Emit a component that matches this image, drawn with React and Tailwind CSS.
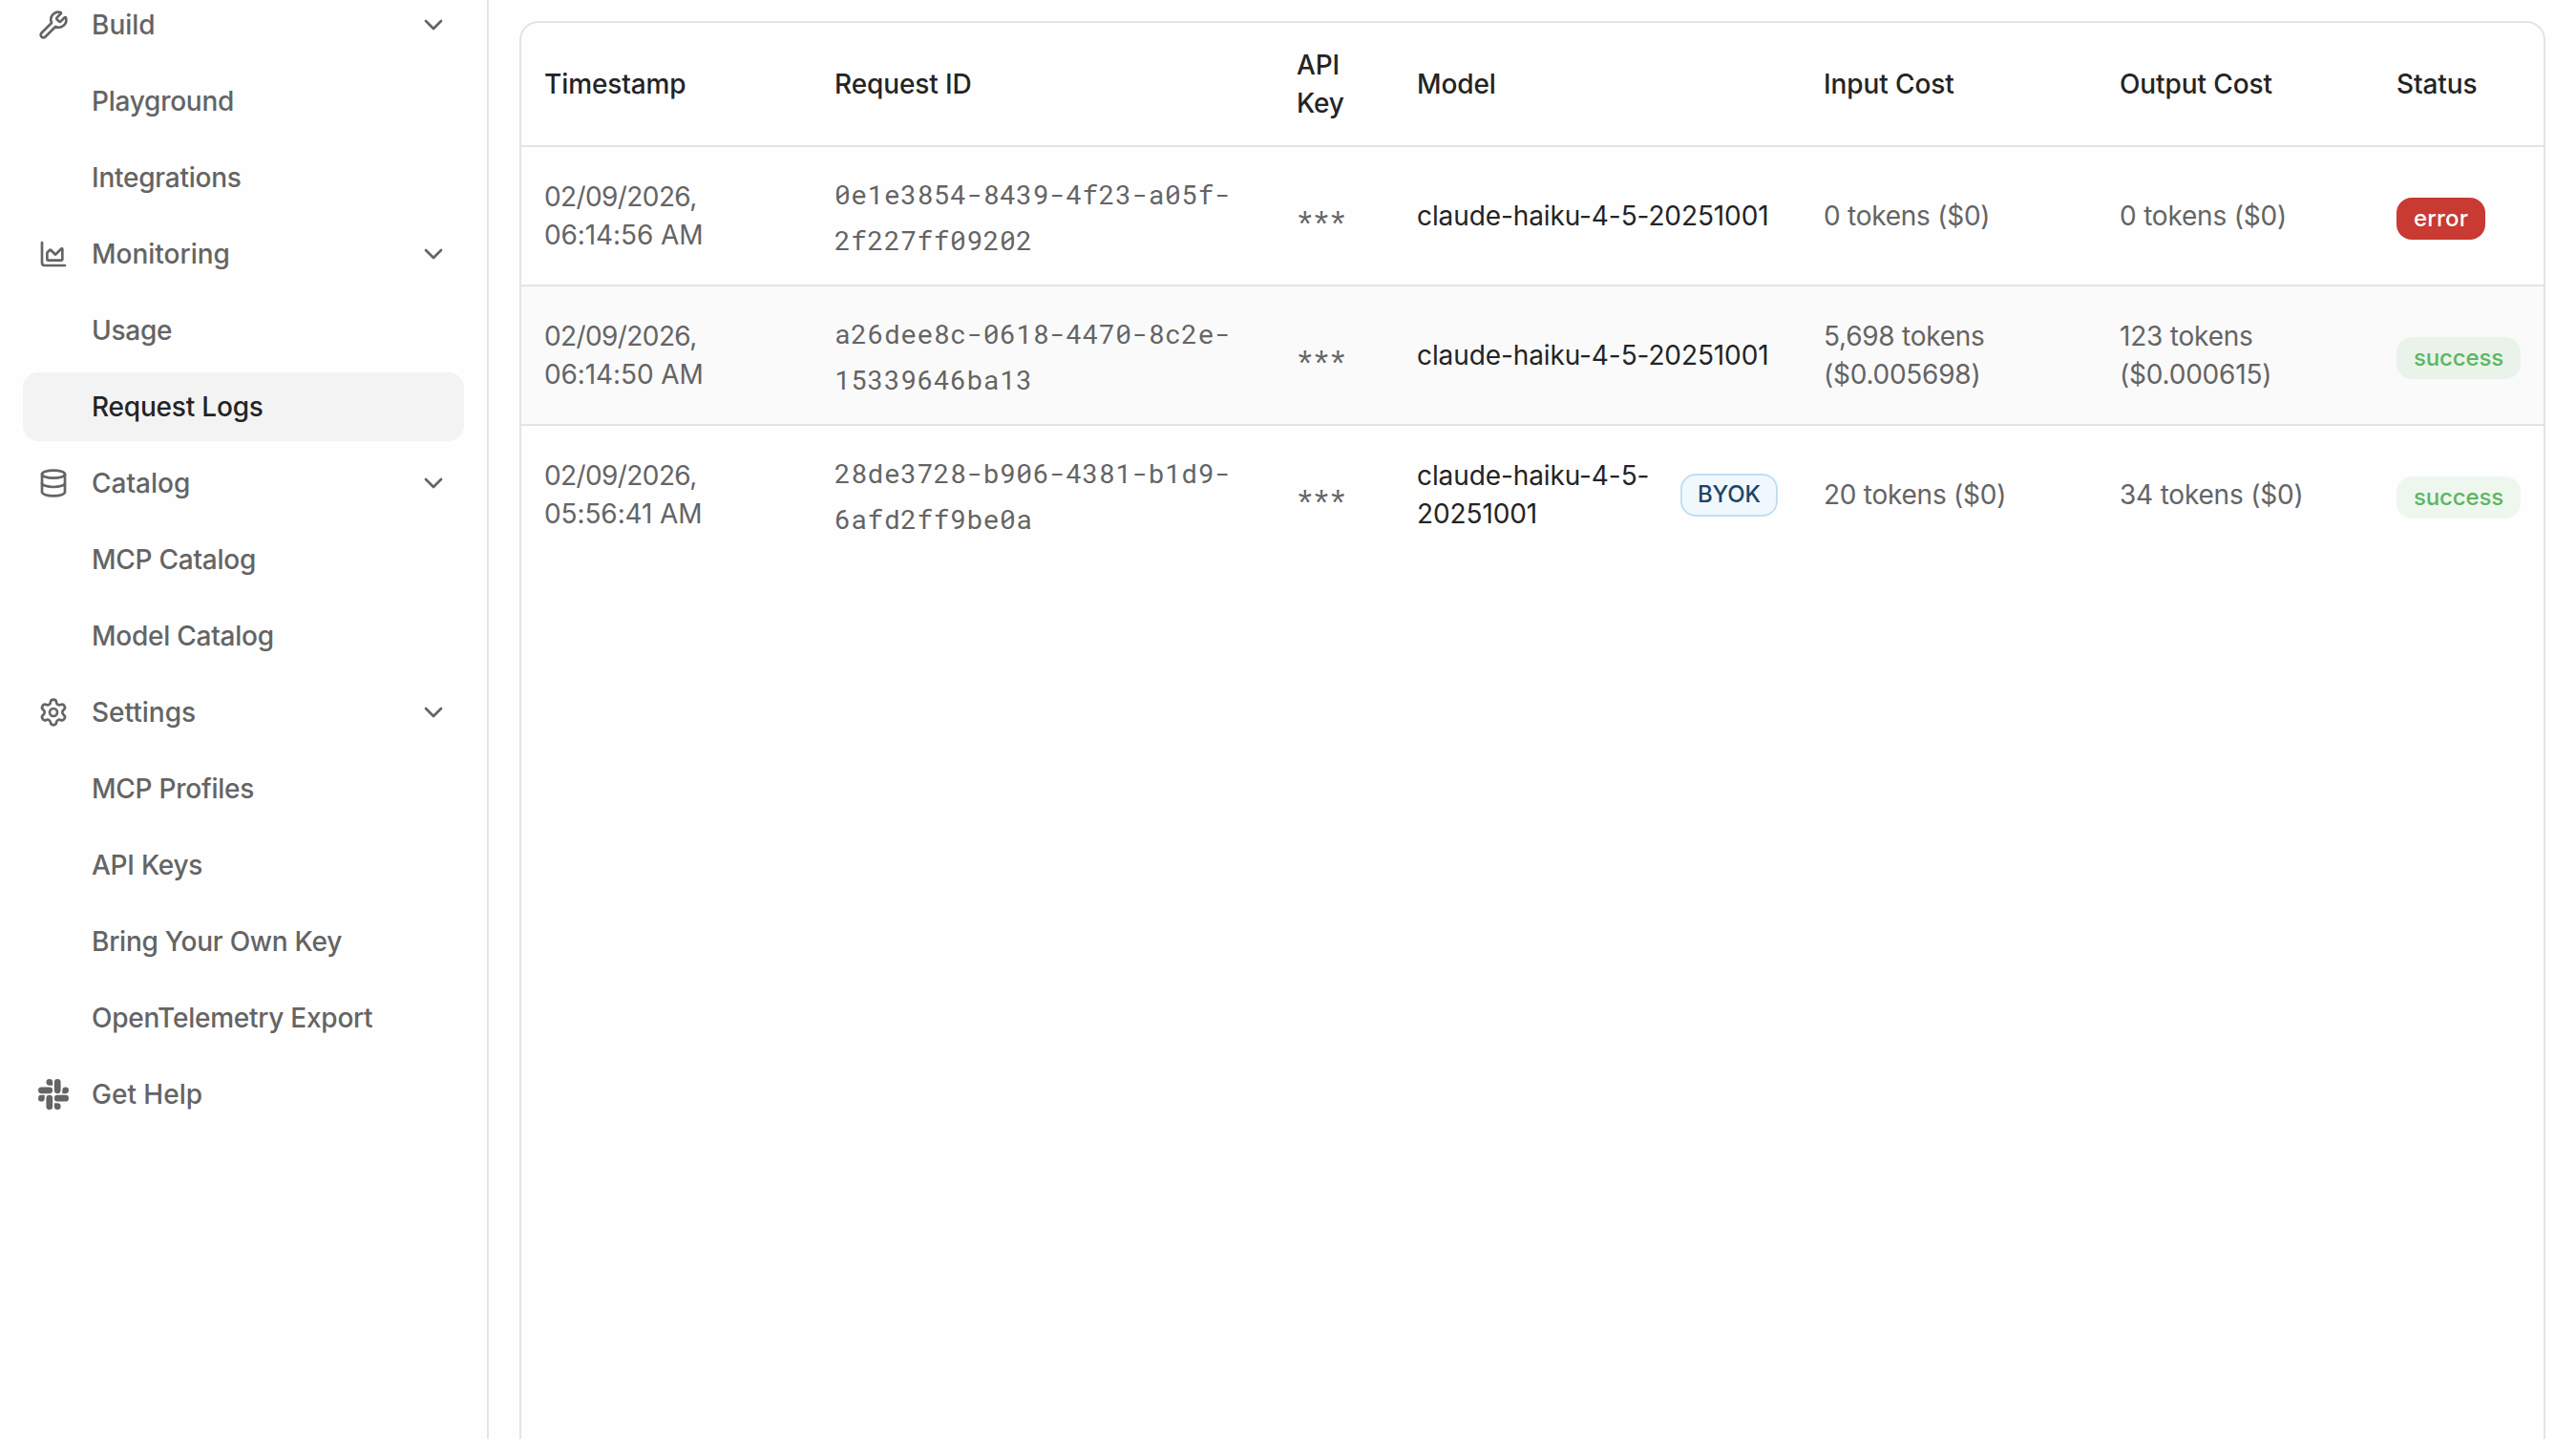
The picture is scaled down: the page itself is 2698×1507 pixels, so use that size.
import { ChartArea, ChevronDown, Database, Settings, Wrench } from "lucide-react";
import { SiSlack } from "react-icons/si";

const sections = [
  { label: "Build", icon: Wrench, items: ["Playground", "Integrations"] },
  { label: "Monitoring", icon: ChartArea, items: ["Usage", "Request Logs"] },
  { label: "Catalog", icon: Database, items: ["MCP Catalog", "Model Catalog"] },
  {
    label: "Settings",
    icon: Settings,
    items: ["MCP Profiles", "API Keys", "Bring Your Own Key", "OpenTelemetry Export"],
  },
];

const columns = [
  { label: "Timestamp", width: "w-[304px]" },
  { label: "Request ID", width: "w-[484px]" },
  { label: "API Key", width: "w-[126px]" },
  { label: "Model", width: "w-[426px]" },
  { label: "Input Cost", width: "w-[310px]" },
  { label: "Output Cost", width: "w-[290px]" },
  { label: "Status", width: "w-[178px]" },
];

const logs = [
  {
    date: "02/09/2026,",
    time: "06:14:56 AM",
    id: ["0e1e3854-8439-4f23-a05f-", "2f227ff09202"],
    model: ["claude-haiku-4-5-20251001"],
    input: ["0 tokens ($0)"],
    output: ["0 tokens ($0)"],
    status: "error",
  },
  {
    date: "02/09/2026,",
    time: "06:14:50 AM",
    id: ["a26dee8c-0618-4470-8c2e-", "15339646ba13"],
    model: ["claude-haiku-4-5-20251001"],
    input: ["5,698 tokens", "($0.005698)"],
    output: ["123 tokens", "($0.000615)"],
    status: "success",
  },
  {
    date: "02/09/2026,",
    time: "05:56:41 AM",
    id: ["28de3728-b906-4381-b1d9-", "6afd2ff9be0a"],
    model: ["claude-haiku-4-5-", "20251001"],
    byok: true,
    input: ["20 tokens ($0)"],
    output: ["34 tokens ($0)"],
    status: "success",
  },
];

function Lines({ lines }) {
  return lines.map((line) => (
    <div key={line} className="whitespace-nowrap">
      {line}
    </div>
  ));
}

function NavHeader({ label, icon: Icon }) {
  return (
    <div className="flex h-[72px] items-center gap-6 px-4">
      <Icon size={32} strokeWidth={2} className="shrink-0" />
      <span className="flex-1">{label}</span>
      <ChevronDown size={32} strokeWidth={2} className="shrink-0" />
    </div>
  );
}

function NavItem({ label }) {
  const active = label === "Request Logs";
  return (
    <div
      className={
        active
          ? "flex h-[72px] items-center rounded-2xl bg-[#f3f3f3] pl-[72px] tracking-[-0.2px] text-[#242424]"
          : "flex h-[72px] items-center pl-[72px] tracking-[-0.25px]"
      }
    >
      {label}
    </div>
  );
}

function Sidebar() {
  return (
    <nav className="-mt-[10px] flex w-[462px] flex-col gap-2 text-[28px] font-medium leading-10 text-[#646464]">
      {sections.map((section) => (
        <div key={section.label} className="flex flex-col gap-2">
          <NavHeader label={section.label} icon={section.icon} />
          {section.items.map((item) => (
            <NavItem key={item} label={item} />
          ))}
        </div>
      ))}
      <div className="flex h-[72px] items-center gap-6 px-4">
        <SiSlack size={32} className="shrink-0" />
        <span>Get Help</span>
      </div>
    </nav>
  );
}

function StatusBadge({ status }) {
  return (
    <span
      className={
        status === "error"
          ? "mt-1.5 inline-flex h-11 items-center rounded-2xl bg-[#c93a33] px-[18px] text-2xl font-medium tracking-[0.2px] text-white"
          : "mt-1.5 inline-flex h-11 items-center rounded-2xl bg-[#4caf50]/9 px-[18px] text-2xl font-medium tracking-[-0.15px] text-[#5cb663]"
      }
    >
      {status}
    </span>
  );
}

function LogRow({ log, index }) {
  return (
    <tr
      className={
        index === 2
          ? "h-[145px]"
          : index === 1
            ? "h-[146px] border-b-2 border-[#e4e4e4] bg-[#fafafa]"
            : "h-[146px] border-b-2 border-[#e4e4e4]"
      }
    >
      <td className="whitespace-nowrap px-6 tracking-[-0.1px]">
        <div className="tracking-[-0.6px]">{log.date}</div>
        <div>{log.time}</div>
      </td>
      <td className="px-6 pt-[3px] font-['Roboto_Mono','Liberation_Mono',monospace] leading-[48px] tracking-[0.5px]">
        <Lines lines={log.id} />
      </td>
      <td className="px-6 pt-[9px] font-['Roboto_Mono','Liberation_Mono',monospace] leading-[48px] tracking-[0.48px]">
        ***
      </td>
      <td className="px-6 tracking-[-0.1px] text-[#242424]">
        <div className="flex items-center justify-between">
          <div>
            <Lines lines={log.model} />
          </div>
          {log.byok && (
            <span className="flex h-[45px] items-center rounded-2xl border-2 border-[#bfdff5] bg-[#f1f8fd] px-4 text-2xl font-medium text-[#1d4568]">
              BYOK
            </span>
          )}
        </div>
      </td>
      <td className="px-6 tracking-[-0.25px]">
        <Lines lines={log.input} />
      </td>
      <td className="px-6 tracking-[-0.2px]">
        <Lines lines={log.output} />
      </td>
      <td className="px-6">
        <StatusBadge status={log.status} />
      </td>
    </tr>
  );
}

export default function App() {
  return (
    <div className="flex h-[1507px] w-[2698px] overflow-hidden bg-[#fefefe] font-['Inter',sans-serif]">
      <aside className="w-[512px] shrink-0 border-r-2 border-[#e4e4e4] px-6">
        <Sidebar />
      </aside>
      <main className="flex-1 px-8 pt-[22px]">
        <div className="h-[1600px] overflow-hidden rounded-[20px] border-2 border-[#e4e4e4]">
          <table className="w-full table-fixed border-collapse text-left text-[28px] leading-10 text-[#646464]">
            <thead>
              <tr className="h-[129px] border-b-2 border-[#e4e4e4]">
                {columns.map((column) => (
                  <th
                    key={column.label}
                    className={`${column.width} px-6 font-medium tracking-[-0.1px] text-[#242424]`}
                  >
                    {column.label}
                  </th>
                ))}
              </tr>
            </thead>
            <tbody>
              {logs.map((log, index) => (
                <LogRow key={log.id[0]} log={log} index={index} />
              ))}
            </tbody>
          </table>
        </div>
      </main>
    </div>
  );
}
